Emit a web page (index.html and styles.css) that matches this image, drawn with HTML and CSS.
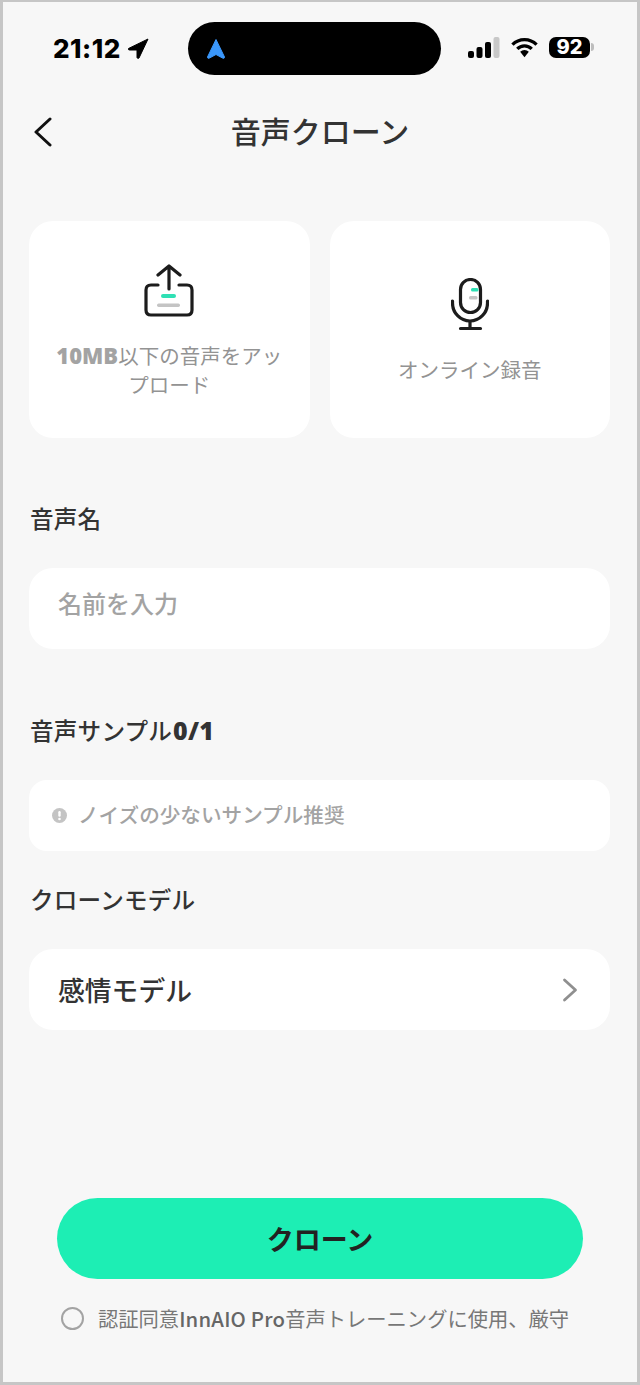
FILE: index.html
```html
<!DOCTYPE html>
<html lang="ja">
<head>
<meta charset="utf-8">
<title>音声クローン</title>
<link rel="stylesheet" href="styles.css">
</head>
<body>
<div class="screen">
  <div class="status">
    <div class="time"><span>21:12</span>
      <svg class="loc" width="22" height="22" viewBox="0 0 22 22"><path d="M21 1 L1.500 10.500 Q1 12 2.500 12 L10 12 L10 19.500 Q10.500 21 12 20 Z" fill="#000" stroke="#000" stroke-width="1" stroke-linejoin="round"/></svg>
    </div>
    <div class="island">
      <svg width="20" height="22" viewBox="0 0 20 22"><path d="M10 1.500 L18.500 19 Q18.500 21 16.500 20 L10 16.500 L3.500 20 Q1.500 21 1.500 19 Z" fill="#3a97fb" stroke="#3a97fb" stroke-linejoin="round"/></svg>
    </div>
    <div class="sys">
      <svg width="32" height="21" viewBox="0 0 32 21"><rect x="0" y="14" width="6" height="7" rx="2" fill="#000"/><rect x="8.500" y="10" width="6" height="11" rx="2" fill="#000"/><rect x="17" y="5" width="6" height="16" rx="2" fill="#000"/><rect x="25.500" y="0" width="6" height="21" rx="2" fill="#c8c8c8"/></svg>
      <svg width="27" height="21" viewBox="0 0 28 21"><path d="M1.500 7.500 A17.500 17.500 0 0 1 26.500 7.500" fill="none" stroke="#000" stroke-width="3.400"/><path d="M6.500 12 A10.500 10.500 0 0 1 21.500 12" fill="none" stroke="#000" stroke-width="3.400"/><path d="M9.500 15 A6.500 6.500 0 0 1 18.500 15 L14 20.500 Z" fill="#000"/></svg>
      <div class="battery"><div class="batt-body">92</div><div class="batt-tip"></div></div>
    </div>
  </div>

  <header class="nav">
    <svg class="back" width="20" height="30" viewBox="0 0 20 30"><path d="M17 2 L3 15 L17 28" fill="none" stroke="#111" stroke-width="3" stroke-linecap="round" stroke-linejoin="round"/></svg>
    <h1 class="title">音声クローン</h1>
  </header>

  <div class="cards">
    <div class="card">
      <svg class="card-icon" width="50" height="53" viewBox="0 0 50 53"><path d="M14 21 L7 21 Q2 21 2 26 L2 46 Q2 51 7 51 L43 51 Q48 51 48 46 L48 26 Q48 21 43 21 L35 21" fill="none" stroke="#1c1c1c" stroke-width="3.200" stroke-linecap="round"/><path d="M25 25 L25 3 M14 11 L25 2 L36 11" fill="none" stroke="#1c1c1c" stroke-width="3.200" stroke-linecap="round" stroke-linejoin="round"/><rect x="17" y="30" width="15" height="4" rx="2" fill="#2fe0b4"/><rect x="13" y="39.500" width="23" height="3.500" rx="1.700" fill="#c4c4c4"/></svg>
      <p class="card-text"><b>10MB</b>以下の音声をアップロード</p>
    </div>
    <div class="card">
      <svg class="card-icon" width="38" height="53" viewBox="0 0 38 53"><rect x="9.500" y="1.500" width="20" height="33" rx="10" fill="none" stroke="#1c1c1c" stroke-width="3.200"/><path d="M1.500 23 L1.500 25 A17.500 18 0 0 0 36.500 25 L36.500 23" fill="none" stroke="#1c1c1c" stroke-width="3.200" stroke-linecap="round"/><path d="M19 44 L19 50 M9.500 50.500 L29.500 50.500" fill="none" stroke="#1c1c1c" stroke-width="3.200" stroke-linecap="round"/><rect x="20" y="10" width="7.500" height="3.500" rx="1.500" fill="#2fe0b4"/><rect x="18" y="18" width="8.500" height="3.400" rx="1.500" fill="#c4c4c4"/></svg>
      <p class="card-text">オンライン録音</p>
    </div>
  </div>

  <h2 class="label label-name">音声名</h2>
  <div class="field field-name"><span class="placeholder">名前を入力</span></div>

  <h2 class="label label-sample">音声サンプル<b>0/1</b></h2>
  <div class="hint">
    <svg width="15" height="15" viewBox="0 0 15 15"><circle cx="7.500" cy="7.500" r="7.500" fill="#c4c4c4"/><rect x="6.300" y="3" width="2.400" height="5.800" rx="1.200" fill="#fff"/><circle cx="7.500" cy="11" r="1.300" fill="#fff"/></svg>
    <span>ノイズの少ないサンプル推奨</span>
  </div>

  <h2 class="label label-model">クローンモデル</h2>
  <div class="field field-model">
    <span class="model">感情モデル</span>
    <svg width="16" height="24" viewBox="0 0 16 24"><path d="M2.500 2 L13.500 12 L2.500 22" fill="none" stroke="#8f8f8f" stroke-width="2.800" stroke-linecap="round" stroke-linejoin="round"/></svg>
  </div>

  <button class="cta" type="button">クローン</button>

  <div class="agree">
    <span class="radio"></span>
    <span class="agree-text">認証同意<b>InnAIO Pro</b>音声トレーニングに使用、厳守</span>
  </div>
</div>
</body>
</html>
```

FILE: styles.css
```css
* { box-sizing: border-box; }
html, body { margin: 0; padding: 0; }
body {
  width: 640px;
  height: 1385px;
  overflow: hidden;
  font-family: "Noto Sans CJK JP", "Noto Sans", sans-serif;
}
.screen {
  width: 640px;
  height: 1385px;
  border: 3px solid #c6c6c6;
  border-top-width: 2px;
  background: #f7f7f7;
  display: flex;
  flex-direction: column;
  overflow: hidden;
}
.status {
  height: 53px;
  margin-top: 20px;
  display: flex;
  align-items: center;
  flex: none;
}
.time {
  width: 185px;
  padding-left: 50px;
  display: flex;
  align-items: center;
  gap: 6px;
  font-family: "Inter", sans-serif;
  font-weight: 800;
  font-size: 26px;
  letter-spacing: 0.5px;
  color: #000;
}
.island {
  width: 253px;
  height: 53px;
  border-radius: 27px;
  background: #000;
  display: flex;
  align-items: center;
  padding-left: 18px;
}
.sys {
  display: flex;
  align-items: center;
  gap: 11px;
  margin-left: 27px;
  padding-bottom: 3px;
}
.battery { display: flex; align-items: center; gap: 1px; }
.batt-body {
  width: 41px;
  height: 21px;
  border-radius: 7px;
  background: #000;
  color: #fff;
  font-family: "Inter", sans-serif;
  font-weight: 800;
  font-size: 20px;
  line-height: 21px;
  text-align: center;
}
.batt-tip { width: 3px; height: 8px; border-radius: 0 3px 3px 0; background: #bdbdbd; }
.nav {
  position: relative;
  height: 60px;
  margin-top: 27px;
  padding-bottom: 4px;
  flex: none;
  display: flex;
  align-items: center;
  justify-content: center;
}
.back { position: absolute; left: 30px; top: 15px; }
.title {
  margin: 0;
  font-size: 30px;
  font-weight: 500;
  color: #333;
  line-height: 56px;
}
.cards {
  display: flex;
  gap: 20px;
  margin: 59px 27px 0 26px;
  flex: none;
}
.card {
  flex: 1 1 0;
  height: 217px;
  border-radius: 24px;
  background: #fff;
  display: flex;
  flex-direction: column;
  align-items: center;
  justify-content: center;
  padding: 3px 26px 0;
}
.card-icon { flex: none; display: block; }
.card-text {
  margin: 24px 0 0;
  font-size: 20.500px;
  line-height: 29px;
  color: #939393;
  font-weight: 400;
  text-align: center;
  word-break: break-all;
}
.card-text b {
  font-family: "Open Sans", sans-serif;
  font-weight: 800;
  font-size: 22px;
  line-height: 1;
  color: #a3a3a3;
}
.label {
  margin: 0 0 0 27px;
  font-size: 23.600px;
  font-weight: 500;
  letter-spacing: 0.2px;
  color: #333;
  line-height: 34px;
  flex: none;
}
.label b {
  font-family: "Open Sans", sans-serif;
  font-weight: 800;
  font-size: 25px;
  line-height: 1;
  margin-left: 1px;
}
.label-name { margin-top: 63px; }
.label-sample { margin-top: 64px; }
.label-model { margin-top: 31px; }
.field {
  margin: 33px 27px 0 26px;
  height: 81px;
  border-radius: 24px;
  background: #fff;
  display: flex;
  align-items: center;
  padding: 0 32px 0 29px;
  flex: none;
}
.field-model { justify-content: space-between; }
.placeholder {
  font-size: 24px;
  color: #a3a3a3;
  font-weight: 500;
  position: relative;
  top: -6px;
}
.model { font-size: 26.800px; font-weight: 500; color: #333; }
.hint {
  margin: 33px 27px 0 26px;
  height: 71px;
  border-radius: 18px;
  background: #fff;
  display: flex;
  align-items: center;
  gap: 11px;
  padding: 0 0 0 23px;
  flex: none;
  color: #a3a3a3;
  font-size: 20.600px;
  font-weight: 500;
}
.hint span { position: relative; top: -2px; }
.cta {
  display: block;
  margin: 168px 54px 0;
  width: 526px;
  height: 81px;
  border: 0;
  border-radius: 41px;
  background: #1deeb4;
  color: #222;
  font-family: inherit;
  font-size: 27px;
  font-weight: 700;
  flex: none;
}
.agree {
  display: flex;
  align-items: center;
  margin: 22px 0 0 58px;
  gap: 14px;
  flex: none;
}
.radio {
  width: 23px;
  height: 23px;
  border-radius: 50%;
  border: 2px solid #a3a3a3;
  flex: none;
}
.agree-text {
  font-size: 20.300px;
  color: #777;
  white-space: nowrap;
  line-height: 34px;
}
.agree-text b { font-weight: 500; color: #666; letter-spacing: 0.2px; }
```
